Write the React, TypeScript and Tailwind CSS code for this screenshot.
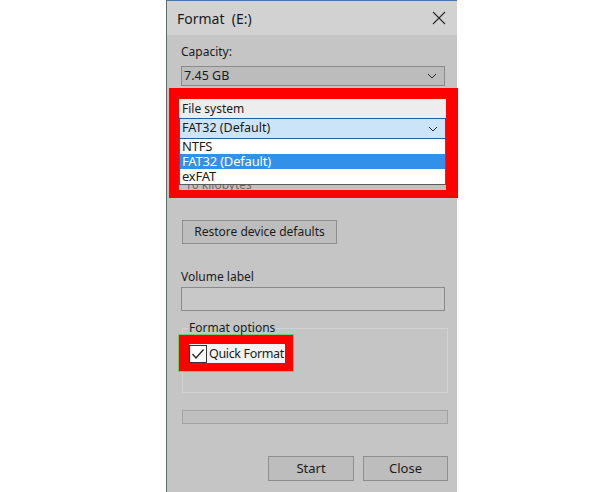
import React from "react"

const font = { fontFamily: '"Noto Sans", "Open Sans", sans-serif' }

function Chevron() {
  return (
    <svg width="10" height="6" viewBox="0 0 10 6" className="shrink-0">
      <polyline points="1,1 5,5 9,1" fill="none" stroke="#2b2b2b" strokeWidth="1" />
    </svg>
  )
}

export default function App() {
  return (
    <div className="w-[600px] h-[492px] bg-white flex overflow-hidden text-[#1b1b1b]" style={font}>
      <div className="ml-[166px] w-[291px] h-[492px] flex flex-col bg-[#c5c5c5] border-l border-[#5e6b66]">
        {/* title bar */}
        <div className="h-[35px] shrink-0 bg-[#d2d2d2] border-t border-[#4a74b0] flex items-center justify-between pl-[10px] pr-[11px]">
          <span className="text-[14px]">Format&nbsp; (E:)</span>
          <svg width="14" height="14" viewBox="0 0 14 14">
            <path d="M1 1 L13 13 M13 1 L1 13" stroke="#2a2a2a" strokeWidth="1.1" />
          </svg>
        </div>

        {/* capacity */}
        <div className="mt-[9px] ml-[14px] h-[16px] text-[12px] leading-[16px]">Capacity:</div>
        <div className="mt-[6px] ml-[14px] w-[264px] h-[20px] bg-[#bcbcbc] border border-[#8b8b8b] flex items-center justify-between pl-[2px] pr-[7px] text-[12.5px]">
          <span>7.45 GB</span>
          <Chevron />
        </div>

        {/* file system, highlighted */}
        <div className="mt-[2px] ml-[2px] w-[289px] h-[110px] bg-[#ff0000] pt-[11px] pl-[10px]">
          <div className="w-[267px]">
            <div className="h-[19px] bg-[#ededed] pl-[3px] text-[12px] leading-[19px]">File system</div>
            <div className="h-[21px] bg-[#cce4f7] border border-[#1f5fa8] flex items-center justify-between pl-[2px] pr-[7px] text-[12.5px]">
              <span>FAT32 (Default)</span>
              <Chevron />
            </div>
            <div className="h-[46px] bg-white border border-[#5c5c5c] border-t-0 text-[13px] leading-[15px] tracking-[-0.2px]">
              <div className="h-[15px] pl-[2px]">NTFS</div>
              <div className="h-[15px] pl-[2px] bg-[#3390e8] text-white">FAT32 (Default)</div>
              <div className="h-[15px] pl-[2px]">exFAT</div>
            </div>
            {/* allocation unit text, mostly hidden behind the open list */}
            <div className="h-[5px] bg-[#c2c2c2] overflow-hidden">
              <div className="h-[5px] pl-[6px] text-[12px] leading-[0px] text-[#6a6a6a]">16 kilobytes</div>
            </div>
          </div>
        </div>

        {/* restore */}
        <div className="mt-[22px] ml-[15px] w-[155px] h-[24px] bg-[#bdbdbd] border border-[#8e8e8e] flex items-center justify-center text-[12px]">
          Restore device defaults
        </div>

        {/* volume label */}
        <div className="mt-[24px] ml-[14px] h-[18px] text-[12px] leading-[18px]">Volume label</div>
        <div className="mt-[1px] ml-[14px] w-[264px] h-[24px] bg-[#c8c8c8] border border-[#8a8a8a]" />

        {/* format options */}
        <div className="mt-[17px] ml-[15px] w-[266px] h-[65px] border border-[#d2d2d2]">
          <div className="-mt-[9px] ml-[5px] w-fit px-[1px] bg-[#c5c5c5] text-[12px] leading-[16px]">Format options</div>
          <div className="mt-[-2px] -ml-[5px] w-[116px] h-[38px] bg-[#ff0000] border border-[#6fd06f] pt-[9px] pl-[10px]">
            <div className="w-[96px] h-[19px] bg-[#f3f3f3] flex items-center">
              <div className="w-[18px] h-[18px] shrink-0 border border-[#333] bg-white flex items-center justify-center">
                <svg width="14" height="12" viewBox="0 0 14 12">
                  <polyline points="1.5,6 5,10 12.5,1.5" fill="none" stroke="#222" strokeWidth="1.3" />
                </svg>
              </div>
              <span className="ml-[2px] text-[12.5px] leading-[19px] tracking-[-0.35px] whitespace-nowrap">Quick Format</span>
            </div>
          </div>
        </div>

        {/* progress */}
        <div className="mt-[17px] ml-[15px] w-[266px] h-[14px] bg-[#bfbfbf] border border-[#a3a3a3]" />

        {/* buttons */}
        <div className="mt-[32px] flex justify-end gap-[9px] pr-[9px]">
          <div className="w-[86px] h-[25px] bg-[#bdbdbd] border border-[#8e8e8e] flex items-center justify-center text-[13px]">Start</div>
          <div className="w-[85px] h-[25px] bg-[#bdbdbd] border border-[#8e8e8e] flex items-center justify-center text-[13px]">Close</div>
        </div>
      </div>
    </div>
  )
}
